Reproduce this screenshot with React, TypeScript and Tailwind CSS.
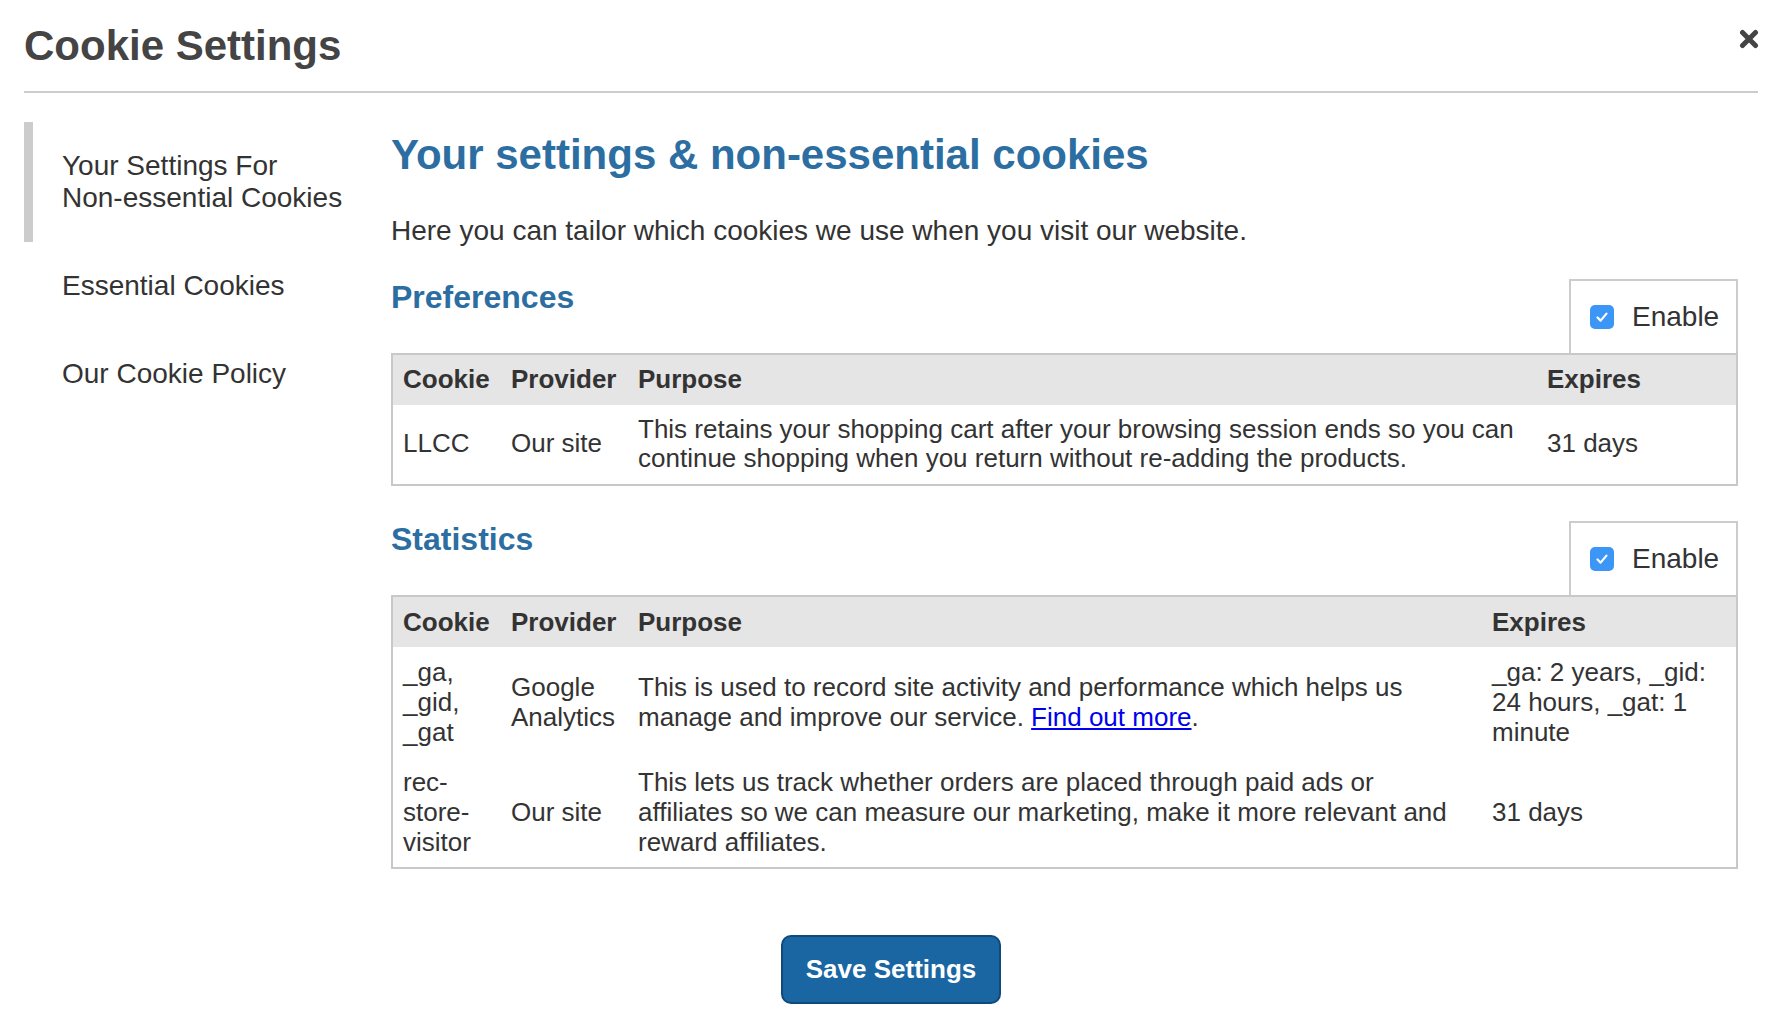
import React from "react";

const font = { fontFamily: '"Liberation Sans", Arial, Helvetica, sans-serif' };

function CloseIcon() {
  return (
    <svg width="20" height="20" viewBox="0 0 20 20" aria-hidden="true">
      <path d="M3.5 3.5 L16.5 16.5 M16.5 3.5 L3.5 16.5" stroke="#444" strokeWidth="5" strokeLinecap="round" fill="none" />
    </svg>
  );
}

function EnableBox() {
  return (
    <label className="flex h-[74px] w-[169px] shrink-0 items-center border-2 border-b-0 border-[#cccccc] bg-white pl-[19px]">
      <span className="flex h-[24px] w-[24px] items-center justify-center rounded-[5px] bg-[#3b96f6]">
        <svg width="16" height="16" viewBox="0 0 16 16" aria-hidden="true">
          <path d="M3.5 8.5 L6.6 11.6 L12.5 4.6" stroke="#fff" strokeWidth="2.2" strokeLinecap="round" strokeLinejoin="round" fill="none" />
        </svg>
      </span>
      <span className="ml-[18px] text-[28px] leading-[32px] text-[#333]">Enable</span>
    </label>
  );
}

type Row = { cookie: React.ReactNode; provider: React.ReactNode; purpose: React.ReactNode; expires: React.ReactNode };

function CookieTable({ purposeW, rows, leading }: { purposeW: number; rows: Row[]; leading: string }) {
  return (
    <table className={`w-full table-fixed border-collapse border-2 border-[#c8c8c8] text-[26px] text-[#333] ${leading}`}>
      <colgroup>
        <col style={{ width: 109 }} />
        <col style={{ width: 127 }} />
        <col style={{ width: purposeW }} />
        <col />
      </colgroup>
      <thead>
        <tr className="bg-[#e5e5e5]">
          <th className="px-[10px] py-[10px] text-left align-middle font-bold">Cookie</th>
          <th className="px-[10px] py-[10px] text-left align-middle font-bold">Provider</th>
          <th className="px-[10px] py-[10px] text-left align-middle font-bold">Purpose</th>
          <th className="px-[10px] py-[10px] text-left align-middle font-bold">Expires</th>
        </tr>
      </thead>
      <tbody>
        {rows.map((r, i) => (
          <tr key={i}>
            <td className="px-[10px] py-[10px] align-middle">{r.cookie}</td>
            <td className="px-[10px] py-[10px] align-middle">{r.provider}</td>
            <td className="px-[10px] py-[10px] align-middle">{r.purpose}</td>
            <td className="px-[10px] py-[10px] align-middle">{r.expires}</td>
          </tr>
        ))}
      </tbody>
    </table>
  );
}

function Section({ title, children, className }: { title: string; children: React.ReactNode; className?: string }) {
  return (
    <section className={className}>
      <div className="flex items-start justify-between">
        <h2 className="text-[32px] font-bold leading-[37px] text-[#2c6ea1]">{title}</h2>
        <EnableBox />
      </div>
      {children}
    </section>
  );
}

export default function App() {
  return (
    <div className="min-h-screen bg-white px-[24px]" style={font}>
      <header className="flex items-start justify-between border-b-2 border-[#cccccc] pb-[21px] pt-[22px]">
        <h1 className="text-[42px] font-bold leading-[48px] text-[#444]">Cookie Settings</h1>
        <button className="mr-[-1px] mt-[7px]" aria-label="Close">
          <CloseIcon />
        </button>
      </header>

      <div className="mt-[29px] flex">
        <nav className="w-[367px] shrink-0 text-[28px] leading-[32px] text-[#333]">
          <div className="border-l-[9px] border-[#cccccc] py-[28px] pl-[29px] pr-[40px]">
            Your Settings For <span className="whitespace-nowrap">Non-essential</span> Cookies
          </div>
          <div className="border-l-[9px] border-transparent py-[28px] pl-[29px] pr-[40px]">Essential Cookies</div>
          <div className="border-l-[9px] border-transparent py-[28px] pl-[29px] pr-[40px]">Our Cookie Policy</div>
        </nav>

        <main className="w-[1347px] shrink-0 pt-[9px]">
          <h2 className="text-[42px] font-bold leading-[48px] text-[#2c6ea1]">Your settings &amp; non-essential cookies</h2>
          <p className="mt-[36px] text-[28px] leading-[32px] text-[#333]">Here you can tailor which cookies we use when you visit our website.</p>

          <Section title="Preferences" className="mt-[32px]">
            <CookieTable
              purposeW={909}
              leading="leading-[29.5px]"
              rows={[
                {
                  cookie: "LLCC",
                  provider: "Our site",
                  purpose:
                    "This retains your shopping cart after your browsing session ends so you can continue shopping when you return without re-adding the products.",
                  expires: "31 days",
                },
              ]}
            />
          </Section>

          <Section title="Statistics" className="mt-[35px]">
            <CookieTable
              purposeW={854}
              leading="leading-[30px]"
              rows={[
                {
                  cookie: "_ga, _gid, _gat",
                  provider: "Google Analytics",
                  purpose: (
                    <>
                      This is used to record site activity and performance which helps us manage and improve our service.{" "}
                      <a href="#" className="text-[#0000ee] underline">Find out more</a>.
                    </>
                  ),
                  expires: "_ga: 2 years, _gid: 24 hours, _gat: 1 minute",
                },
                {
                  cookie: "rec-store-visitor",
                  provider: "Our site",
                  purpose:
                    "This lets us track whether orders are placed through paid ads or affiliates so we can measure our marketing, make it more relevant and reward affiliates.",
                  expires: "31 days",
                },
              ]}
            />
          </Section>
        </main>
      </div>

      <div className="mt-[66px] flex justify-center pb-[20px]">
        <button className="h-[69px] w-[220px] rounded-[10px] border-2 border-[#0f4a7c] bg-[#1a66a3] text-[26px] font-bold text-white">
          Save Settings
        </button>
      </div>
    </div>
  );
}
